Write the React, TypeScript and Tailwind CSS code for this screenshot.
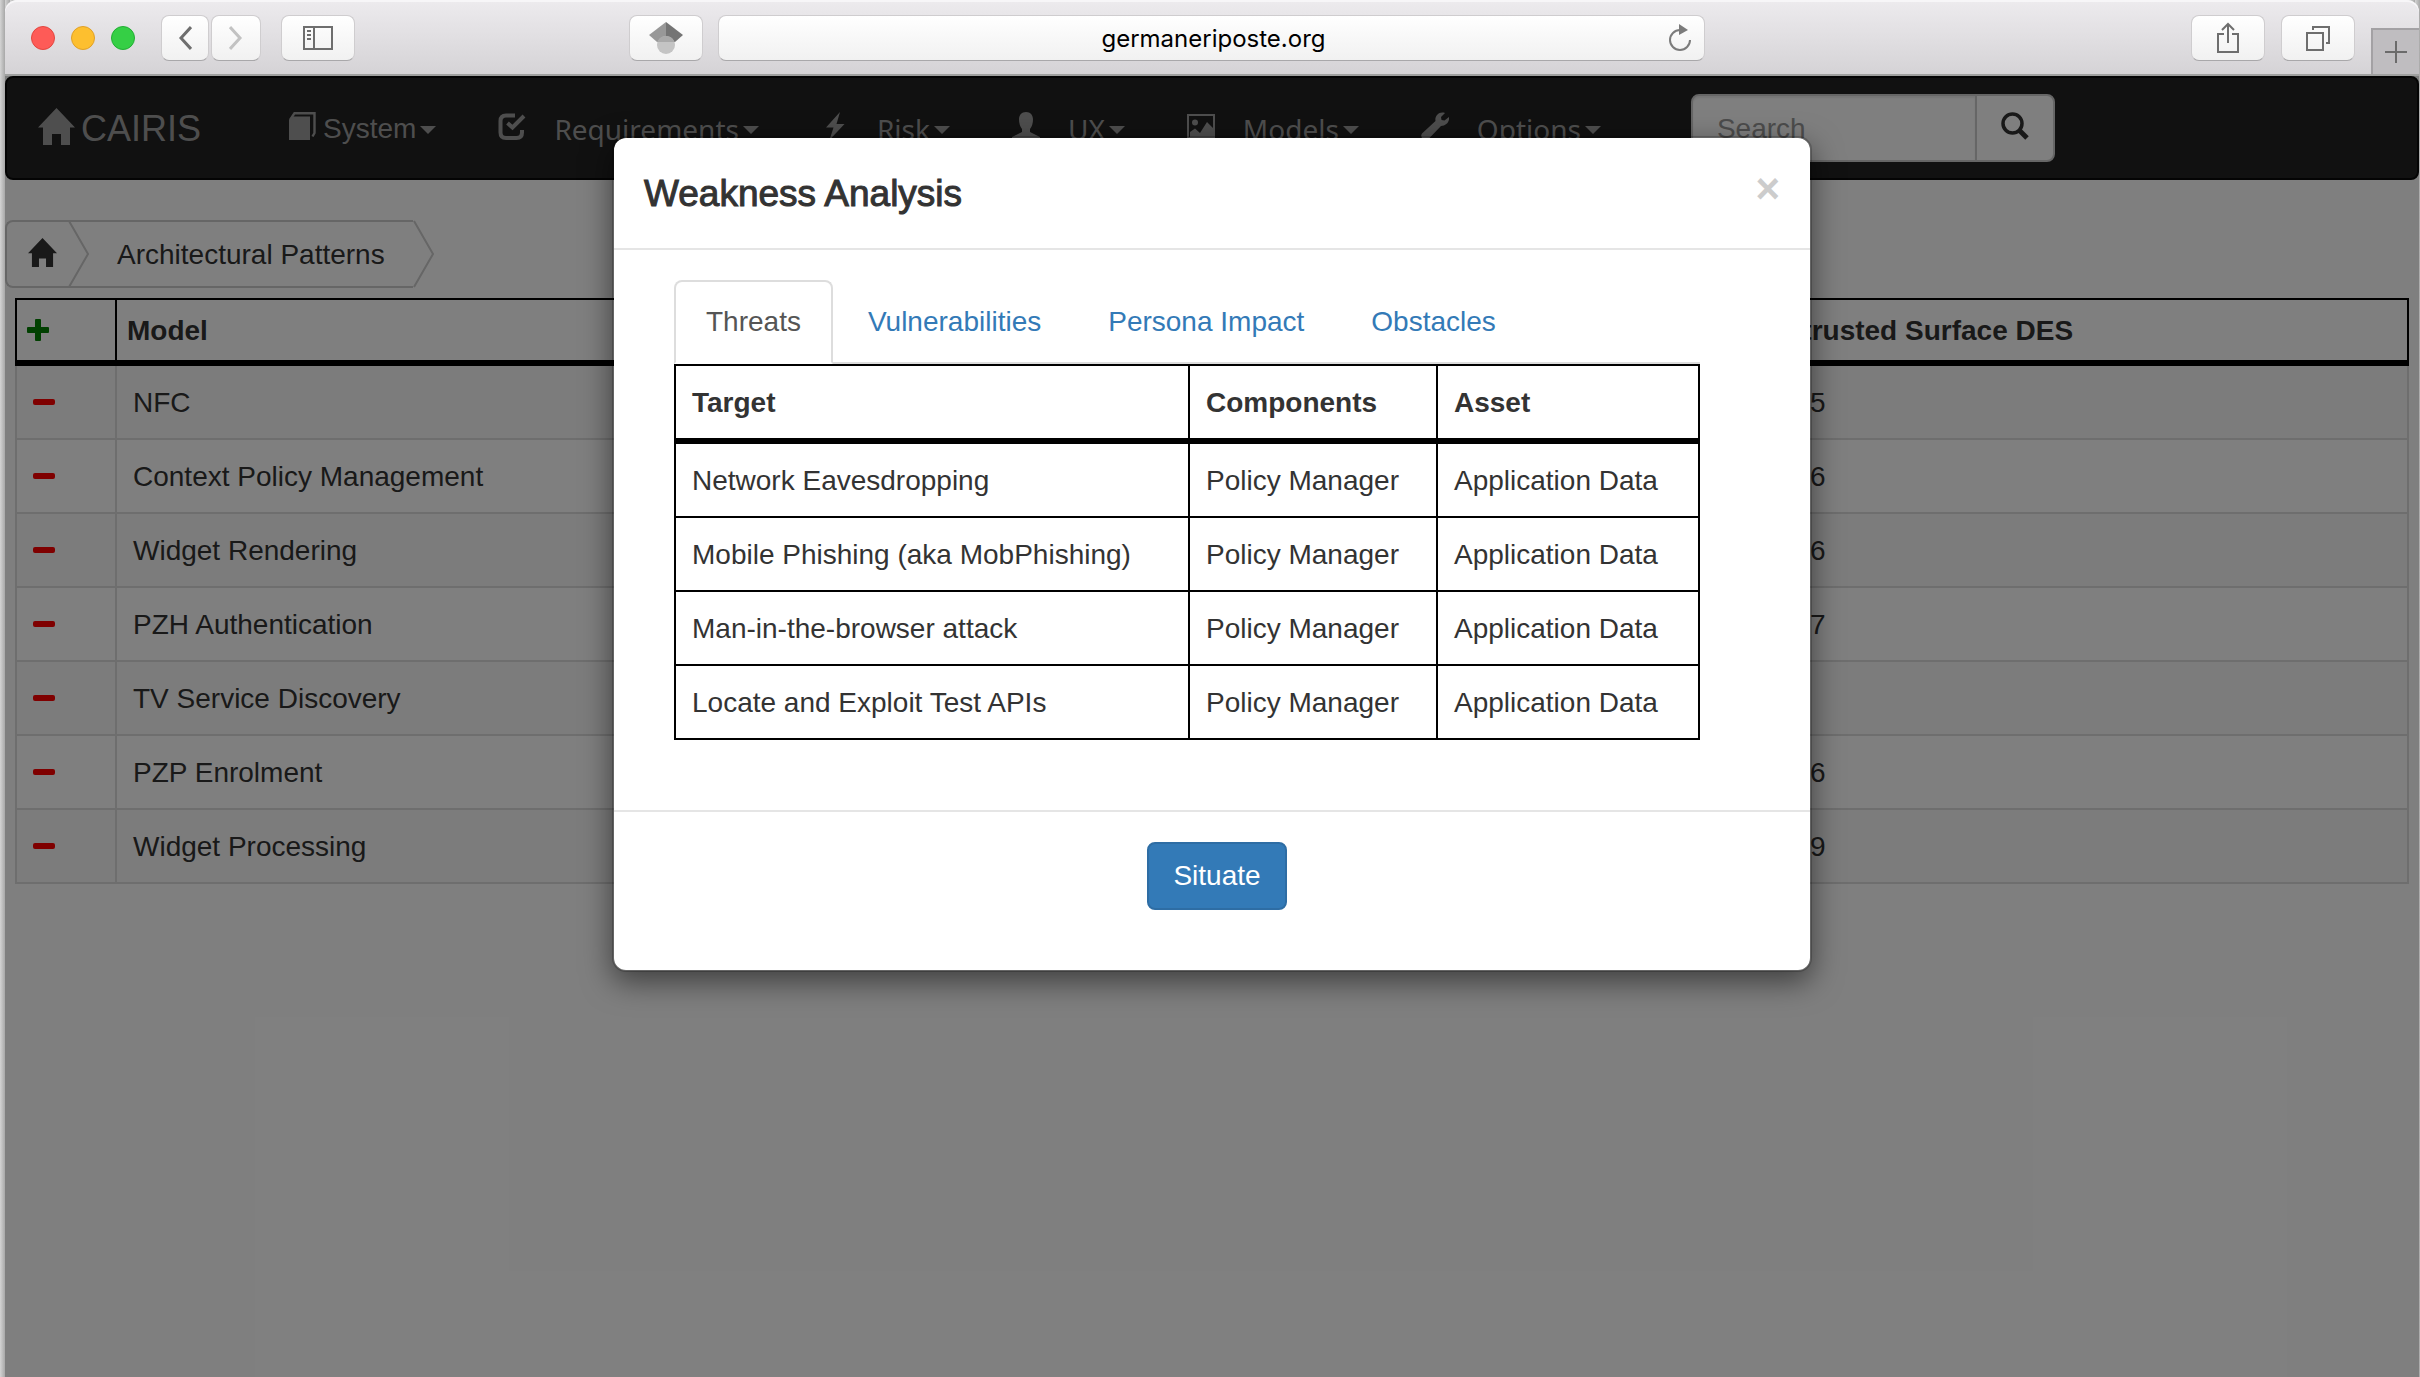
import type { ReactNode } from "react";

const models = [
  { name: "NFC", des: "0.05" },
  { name: "Context Policy Management", des: "0.06" },
  { name: "Widget Rendering", des: "0.06" },
  { name: "PZH Authentication", des: "0.07" },
  { name: "TV Service Discovery", des: "0" },
  { name: "PZP Enrolment", des: "0.06" },
  { name: "Widget Processing", des: "0.09" },
];

const threats = [
  "Network Eavesdropping",
  "Mobile Phishing (aka MobPhishing)",
  "Man-in-the-browser attack",
  "Locate and Exploit Test APIs",
];

const tabs = ["Threats", "Vulnerabilities", "Persona Impact", "Obstacles"];

function HomeIcon({ className }: { className: string }) {
  return (
    <svg viewBox="0 0 37 37" className={className} fill="currentColor" aria-hidden="true">
      <path d="M18.5 0L37 19.5H32V37H23V26H14V37H5V19.5H0Z" />
    </svg>
  );
}

function BookIcon() {
  return (
    <svg viewBox="0 0 28 28" className="mb-1 size-7" aria-hidden="true">
      <path d="M3 4.500H21V28H0V8Z" fill="currentColor" />
      <path d="M1 8L5.500 1.200H25.500V21L23.500 24.500" fill="none" stroke="currentColor" strokeWidth="2.400" />
    </svg>
  );
}

function CheckBoxIcon() {
  return (
    <svg viewBox="0 0 28 28" className="mb-1 size-7" fill="none" stroke="currentColor" aria-hidden="true">
      <path d="M17 3.500H8Q2.500 3.500 2.500 9V20.500Q2.500 26 8 26H18.500Q24 26 24 20.500V18" strokeWidth="4" />
      <path d="M9.500 11L14.500 15.500L26 4" strokeWidth="4" />
    </svg>
  );
}

function BoltIcon() {
  return (
    <svg viewBox="0 0 28 28" className="mb-1 size-7" fill="currentColor" aria-hidden="true">
      <path d="M19 0L5 15.500H12.500L8.500 28L23.500 12H15.500Z" />
    </svg>
  );
}

function UserIcon() {
  return (
    <svg viewBox="0 0 28 28" className="mb-1 size-7" fill="currentColor" aria-hidden="true">
      <path d="M14 0C18.500 0 21 3 21 7.500C21 11 20 14.500 18 17V20L28 25V28H0V25L10 20V17C8 14.500 7 11 7 7.500C7 3 9.500 0 14 0Z" />
    </svg>
  );
}

function PictureIcon() {
  return (
    <svg viewBox="0 0 28 28" className="mb-1 size-7" aria-hidden="true">
      <path d="M1 3H27V26H1Z" fill="none" stroke="currentColor" strokeWidth="2" />
      <circle cx="8" cy="10.500" r="3" fill="currentColor" />
      <path d="M3 20L8 16.500L13 21L20 10L26 16V25H3Z" fill="currentColor" />
    </svg>
  );
}

function WrenchIcon() {
  return (
    <svg viewBox="0 0 28 28" className="mb-1 size-7" fill="currentColor" aria-hidden="true">
      <path d="M24 1L20 5L20.500 8L23.500 8.500L28 5C28.800 10 25 14 20 14L7 27.500Q4.500 29 2 27Q-1 24.500 1 21.500L14.500 9C13.500 4 18 -1 24 1Z" />
    </svg>
  );
}

function SearchIcon() {
  return (
    <svg viewBox="0 0 28 28" className="mb-1 size-7" fill="none" stroke="currentColor" aria-hidden="true">
      <circle cx="11.500" cy="11.500" r="9.500" strokeWidth="3.500" />
      <path d="M18 18L26 26" strokeWidth="5" />
    </svg>
  );
}

function Caret() {
  return (
    <svg viewBox="0 0 16 8" className="ml-1 mt-1 h-2 w-4" fill="currentColor" aria-hidden="true">
      <path d="M0 0H16L8 8Z" />
    </svg>
  );
}

const navItems: { label: string; icon: ReactNode }[] = [
  { label: "Requirements", icon: <CheckBoxIcon /> },
  { label: "Risk", icon: <BoltIcon /> },
  { label: "UX", icon: <UserIcon /> },
  { label: "Models", icon: <PictureIcon /> },
  { label: "Options", icon: <WrenchIcon /> },
];

function ToolButton({ label, width, children }: { label: string; width: string; children: ReactNode }) {
  return (
    <button
      type="button"
      aria-label={label}
      className={`flex h-[46px] shrink-0 items-center justify-center rounded-lg border border-[#cfcdcf] border-b-[#a9a8aa] bg-linear-to-b from-white to-[#f1f1f1] text-[#6e6e6e] ${width}`}
    >
      {children}
    </button>
  );
}

function BrowserBar() {
  return (
    <header className="flex h-[76px] items-center rounded-t-xl border-b-2 border-[#9fa09f] bg-linear-to-b from-[#edebee] to-[#d5d3d6] pl-[26px] pt-0.5 shadow-[inset_0_2px_0_#f7f6f8]">
      <div className="mr-[26px] flex gap-4">
        <button type="button" aria-label="Close window" className="size-6 rounded-full border border-[#e2463f] bg-[#fe5b57]" />
        <button type="button" aria-label="Minimise window" className="size-6 rounded-full border border-[#e0a028] bg-[#fdbf2f]" />
        <button type="button" aria-label="Zoom window" className="size-6 rounded-full border border-[#22ae34] bg-[#35cf45]" />
      </div>
      <ToolButton label="Back" width="w-12">
        <svg viewBox="0 0 14 26" className="h-[26px] w-3.5" fill="none" stroke="currentColor" strokeWidth="3">
          <path d="M13 2L3 13L13 24" />
        </svg>
      </ToolButton>
      <div className="ml-0.5 flex">
        <ToolButton label="Forward" width="w-[50px]">
          <svg viewBox="0 0 14 26" className="h-[26px] w-3.5" fill="none" stroke="#c2c2c2" strokeWidth="3">
            <path d="M1 2L11 13L1 24" />
          </svg>
        </ToolButton>
      </div>
      <div className="ml-5 flex">
        <ToolButton label="Show sidebar" width="w-[74px]">
          <svg viewBox="0 0 30 24" className="h-6 w-[30px]" fill="none" stroke="currentColor" strokeWidth="2">
            <path d="M1 1H29V23H1ZM11 1V23" />
            <path d="M4 5H8M4 9H8M4 13H8" />
          </svg>
        </ToolButton>
      </div>
      <div className="flex-[274]" />
      <ToolButton label="Scholar search" width="w-[74px]">
        <svg viewBox="0 0 34 32" className="h-8 w-[34px]">
          <path d="M17 0L0 13L8 20H17Z" fill="#989898" />
          <path d="M17 0L34 13L26 20H17Z" fill="#747474" />
          <ellipse cx="17" cy="23" rx="9" ry="9" fill="#c4c4c4" />
          <path d="M8.500 20A9 9 0 0 1 25.500 20Z" fill="#a9a9a9" />
        </svg>
      </ToolButton>
      <div className="ml-[15px] min-w-0 flex-[987]">
        <div className="flex h-[46px] items-center rounded-lg border border-[#cfcdcf] border-b-[#a9a8aa] bg-linear-to-b from-white to-[#f1f1f1] pl-10 pr-3">
          <input
            aria-label="Address"
            defaultValue="germaneriposte.org"
            className="min-w-0 flex-1 bg-transparent pt-0.5 text-center font-[Inter,sans-serif] text-[24px] leading-8 text-black outline-none"
          />
          <button type="button" aria-label="Reload" className="text-[#7b7b7b]">
            <svg viewBox="0 0 24 28" className="h-7 w-6" fill="none" stroke="currentColor" strokeWidth="2">
              <path d="M12 6A10 10 0 1 0 22 16" />
              <path d="M11 0L20 6L11 11Z" fill="currentColor" stroke="none" />
            </svg>
          </button>
        </div>
      </div>
      <div className="flex-[486]" />
      <ToolButton label="Share" width="w-[74px]">
        <svg viewBox="0 0 24 32" className="h-8 w-6" fill="none" stroke="currentColor" strokeWidth="2">
          <path d="M8 12H2V30H22V12H16M12 21V2M6 8L12 2L18 8" />
        </svg>
      </ToolButton>
      <div className="ml-4 flex">
        <ToolButton label="Show all tabs" width="w-[74px]">
          <svg viewBox="0 0 26 26" className="size-[26px]" fill="none" stroke="currentColor" strokeWidth="2">
            <path d="M2 8H18V25H2ZM8 5V2H24V18H21" />
          </svg>
        </ToolButton>
      </div>
      <button
        type="button"
        aria-label="New tab"
        className="ml-4 flex h-[46px] w-12 shrink-0 items-center justify-center self-end border-l-2 border-t-2 border-[#a3a1a4] bg-[#bfbdc0] text-[#6b6b6b]"
      >
        <svg viewBox="0 0 22 22" className="size-[22px]" stroke="currentColor" strokeWidth="2">
          <path d="M11 0V22M0 11H22" />
        </svg>
      </button>
    </header>
  );
}

function NavBar() {
  return (
    <nav className="flex h-26 items-center rounded-lg border-2 border-[#080808] bg-[#222] pl-[31px] text-[28px] leading-10 text-[#9d9d9d]">
      <a href="#home" className="flex items-center gap-1.5 text-[36px]">
        <HomeIcon className="mb-1 size-[37px]" />
        <span className="pt-0.5">CAIRIS</span>
      </a>
      <div className="ml-[88px] flex items-center gap-[62px]">
        <button type="button" className="flex items-center">
          <BookIcon />
          <span className="ml-1.5 pt-0.5">System</span>
          <Caret />
        </button>
        {navItems.map((item) => (
          <button type="button" key={item.label} className="flex items-center">
            {item.icon}
            <span className="ml-7 pt-0.5 font-['Noto_Sans',sans-serif]">{item.label}</span>
            <Caret />
          </button>
        ))}
      </div>
      <form className="ml-[90px] flex h-[68px]" role="search">
        <input
          type="text"
          aria-label="Search"
          placeholder="Search"
          className="w-[286px] rounded-l-lg border-2 border-[#ccc] bg-white px-6 pt-0.5 text-[#555] shadow-[inset_0_2px_2px_rgba(0,0,0,0.075)] placeholder:text-[#999]"
        />
        <button
          type="button"
          aria-label="Run search"
          className="-ml-0.5 flex w-20 items-center justify-center rounded-r-lg border-2 border-[#ccc] bg-white text-[#333]"
        >
          <SearchIcon />
        </button>
      </form>
    </nav>
  );
}

function CrumbArrow() {
  return (
    <svg viewBox="0 0 22 68" className="h-[68px] w-[22px] shrink-0" fill="none" stroke="#ccc" strokeWidth="2">
      <path d="M1 1L20 34L1 67" />
    </svg>
  );
}

function Breadcrumb() {
  return (
    <nav aria-label="Breadcrumb" className="mt-10 flex h-[68px] text-[28px] leading-10 text-[#333]">
      <a href="#home" aria-label="Home" className="flex w-[63px] items-center rounded-l-lg border-y-2 border-l-2 border-[#ccc] pb-1 pl-[21px]">
        <HomeIcon className="size-[29px]" />
      </a>
      <div className="-mr-[22px] flex">
        <CrumbArrow />
      </div>
      <a href="#patterns" className="flex items-center border-y-2 border-[#ccc] pl-[49px] pr-7 pt-0.5">
        Architectural Patterns
      </a>
      <CrumbArrow />
    </nav>
  );
}

function ModelTable() {
  return (
    <div className="px-2.5 pt-2.5">
      <table className="w-full table-fixed border-separate border-spacing-0 text-left text-[28px] leading-10 text-[#333]">
        <thead>
          <tr className="h-[68px]">
            <th className="w-[100px] border-2 border-b-[6px] border-r-0 border-black pl-2.5">
              <button type="button" aria-label="Add pattern" className="block text-[#008000]">
                <svg viewBox="0 0 22 22" className="size-[22px]" fill="currentColor">
                  <path d="M9 0H13Q14 0 14 1V8H21Q22 8 22 9V13Q22 14 21 14H14V21Q14 22 13 22H9Q8 22 8 21V14H1Q0 14 0 13V9Q0 8 1 8H8V1Q8 0 9 0Z" />
                </svg>
              </button>
            </th>
            <th className="border-b-[6px] border-l-2 border-t-2 border-black pl-2.5 pt-0.5">Model</th>
            <th className="w-[656px] border-2 border-b-[6px] border-black pl-2.5 pt-0.5">Untrusted Surface DES</th>
          </tr>
        </thead>
        <tbody>
          {models.map((model) => (
            <tr key={model.name} className="h-[74px] odd:bg-[#f9f9f9]">
              <td className="border-b-2 border-l-2 border-[#ddd] pl-4">
                <button type="button" aria-label={`Remove ${model.name}`} className="flex h-7 w-[22px] items-center">
                  <span className="h-1.5 w-[22px] rounded-xs bg-[#f00]" />
                </button>
              </td>
              <td className="border-b-2 border-l-2 border-[#ddd] pl-4 pt-0.5">{model.name}</td>
              <td className="border-x-2 border-b-2 border-[#ddd] pl-4 pt-0.5">{model.des}</td>
            </tr>
          ))}
        </tbody>
      </table>
    </div>
  );
}

function WeaknessDialog() {
  return (
    <div className="absolute inset-0 flex items-start justify-center bg-black/50 pt-15">
      <section
        role="dialog"
        aria-label="Weakness Analysis"
        className="w-[1200px] rounded-[14px] border-2 border-black/20 bg-white bg-clip-padding text-[28px] leading-10 text-[#333] shadow-[0_10px_30px_rgba(0,0,0,0.5)]"
      >
        <div className="flex h-28 items-start justify-between border-b-2 border-[#e5e5e5] px-[30px] pt-[30px]">
          <h4 className="text-[37px] leading-[52px] [-webkit-text-stroke:1px_#333]">Weakness Analysis</h4>
          <button type="button" aria-label="Close" className="text-[42px] font-bold leading-[42px] text-[#ccc]">
            ×
          </button>
        </div>
        <div className="px-15 pb-[70px] pt-[30px]">
          <div className="mr-[50px]">
            <div role="tablist" className="flex gap-[3px] border-b-2 border-[#ddd]">
              {tabs.map((tab, i) => (
                <button
                  key={tab}
                  type="button"
                  role="tab"
                  aria-selected={i === 0}
                  className={
                    i === 0
                      ? "-mb-0.5 rounded-t-lg border-2 border-[#ddd] border-b-white bg-white px-[30px] py-5 text-[#555]"
                      : "-mb-0.5 border-2 border-transparent px-[30px] py-5 text-[#337ab7]"
                  }
                >
                  {tab}
                </button>
              ))}
            </div>
            <table className="w-full table-fixed border-separate border-spacing-0 border-l-2 border-black text-left">
              <thead>
                <tr className="h-20">
                  <th className="border-b-[6px] border-r-2 border-t-2 border-black pl-4 pt-0.5">Target</th>
                  <th className="w-[248px] border-b-[6px] border-r-2 border-t-2 border-black pl-4 pt-0.5">Components</th>
                  <th className="w-[262px] border-b-[6px] border-r-2 border-t-2 border-black pl-4 pt-0.5">Asset</th>
                </tr>
              </thead>
              <tbody>
                {threats.map((threat) => (
                  <tr key={threat} className="h-[74px]">
                    <td className="border-b-2 border-r-2 border-black pl-4 pt-0.5">{threat}</td>
                    <td className="border-b-2 border-r-2 border-black pl-4 pt-0.5">Policy Manager</td>
                    <td className="border-b-2 border-r-2 border-black pl-4 pt-0.5">Application Data</td>
                  </tr>
                ))}
              </tbody>
            </table>
          </div>
        </div>
        <div className="flex justify-center border-t-2 border-[#e5e5e5] pb-15 pl-2.5 pt-[30px]">
          <button type="button" className="h-[68px] rounded-lg border-2 border-[#2e6da4] bg-[#337ab7] px-6 text-white">
            Situate
          </button>
        </div>
      </section>
    </div>
  );
}

export default function App() {
  return (
    <div className="flex min-h-screen flex-col bg-linear-to-r from-[#d4d4d4] to-[#a8a8a8] bg-[length:5px_100%] pl-[5px] pr-px font-['Liberation_Sans',Arial,sans-serif]">
      <BrowserBar />
      <main className="relative flex-1 bg-white">
        <NavBar />
        <Breadcrumb />
        <ModelTable />
        <WeaknessDialog />
      </main>
    </div>
  );
}
